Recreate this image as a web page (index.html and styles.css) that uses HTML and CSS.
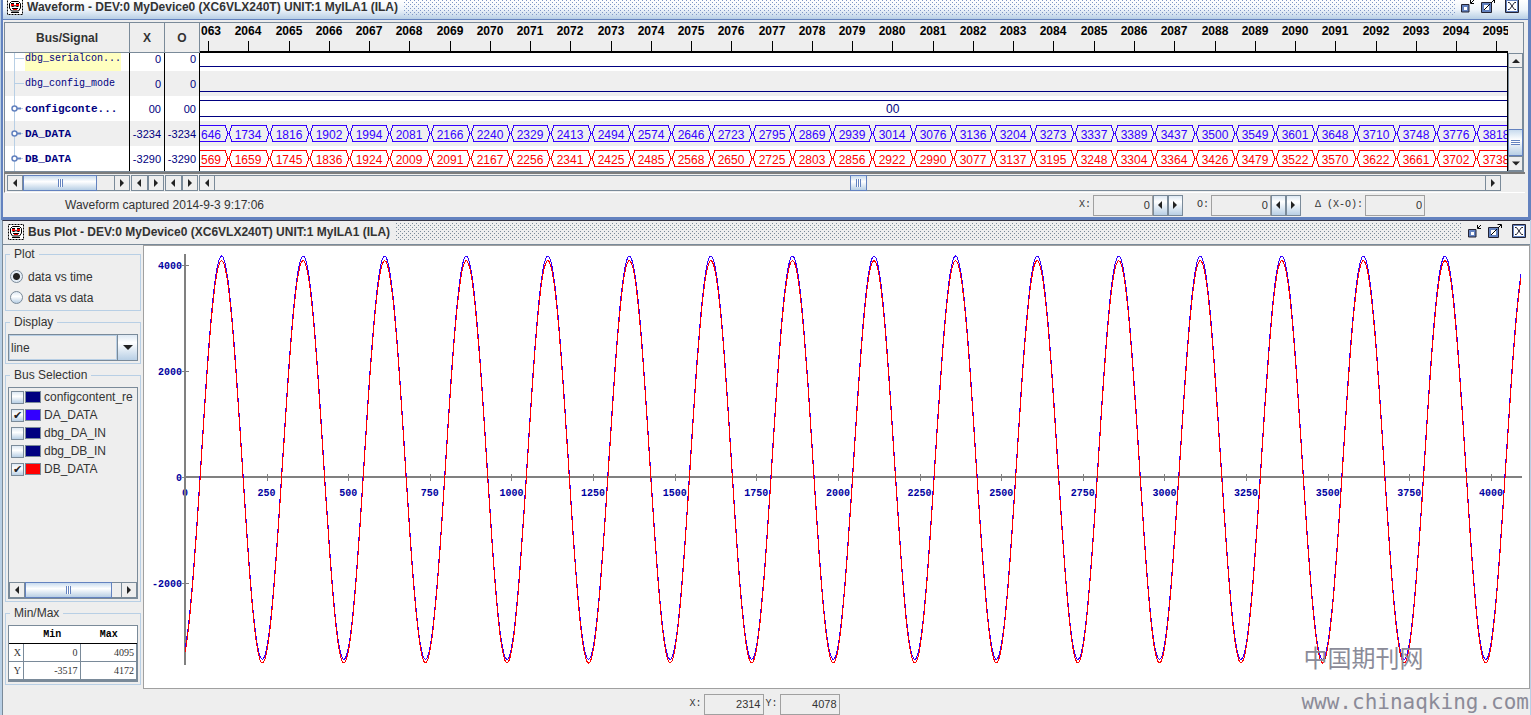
FILE: index.html
```html
<!DOCTYPE html>
<html lang="en">
<head>
  <meta charset="utf-8">
  <title>Waveform and Bus Plot</title>
  <link rel="stylesheet" href="styles.css">
</head>
<body>
  <!-- Shared icons -->
  <svg class="defs" width="0" height="0">
    <defs>
      <symbol id="app" viewBox="0 0 16 16">
        <rect x="0.500" y="0.500" width="15" height="15" fill="#fff" stroke="#000" stroke-dasharray="2 1"/>
        <path d="M4.500 2.500h7l2 2v4.500l-2 3h-7l-2-3V4.500z" fill="#fff" stroke="#000"/>
        <path d="M4 5h3v2H4zM9 5h3v2H9zM6 10h4v1H6z" fill="#f00"/>
        <path d="M4 4.500h3M9 4.500h3M4.500 7.500h2l1.500-1 1.500 1h2M5 9.500h6M4 13.500h8" fill="none" stroke="#000"/>
      </symbol>
      <symbol id="min" viewBox="0 0 14 14">
        <rect x="2" y="7" width="5" height="5" fill="#fff" stroke="#6382bf" stroke-width="2"/>
        <path d="M0.500 13V5.500H8V13z" fill="none" stroke="#223"/>
        <path d="M9.500 1v3.500H13M10 4l3-3" fill="none" stroke="#000"/>
      </symbol>
      <symbol id="max" viewBox="0 0 14 14">
        <rect x="2" y="5" width="7" height="7" fill="#fff" stroke="#6382bf" stroke-width="2"/>
        <path d="M0.500 13.500V3.500h10v10z" fill="none" stroke="#223"/>
        <path d="M3 11l6-6M10 4l3-3M9.500 0.500h4V4" fill="none" stroke="#000"/>
      </symbol>
      <symbol id="close" viewBox="0 0 14 14">
        <rect x="1.500" y="1.500" width="11" height="11" fill="#fff" stroke="#6382bf"/>
        <path d="M0.500 0.500h13v13H0.500z" fill="none" stroke="#223"/>
        <path d="M3 3.500h1.500l5 7H11M11 3.500H9.500l-5 7H3" fill="none" stroke="#223"/>
      </symbol>
      <symbol id="left" viewBox="0 0 8 8"><path d="M6 0v8L2 4z" fill="#222"/></symbol>
      <symbol id="right" viewBox="0 0 8 8"><path d="M2 0v8l4-4z" fill="#222"/></symbol>
      <symbol id="up" viewBox="0 0 8 8"><path d="M0 6h8L4 2z" fill="#222"/></symbol>
      <symbol id="down" viewBox="0 0 10 6"><path d="M0 0h10L5 5z" fill="#222"/></symbol>
      <symbol id="leaf" viewBox="0 0 18 25"><path d="M7.500 0v25M8 12.500h9" stroke="#b8cfe5"/></symbol>
      <symbol id="leafCut" viewBox="0 0 18 18"><path d="M7.500 0v18M8 5.500h9" stroke="#b8cfe5"/></symbol>
      <symbol id="node" viewBox="0 0 18 25">
        <path d="M7.500 0v25M10 12.500h6" stroke="#b8cfe5"/>
        <path d="M9 12.500h5" stroke="#6382bf" stroke-width="2"/>
        <circle cx="7.500" cy="12.500" r="2.500" fill="#fff" stroke="#6382bf" stroke-width="1.500"/>
      </symbol>
      <pattern id="bumpsBlue" width="4" height="4" patternUnits="userSpaceOnUse">
        <rect width="1" height="1" fill="#7f97c6"/><rect x="2" y="2" width="1" height="1" fill="#7f97c6"/>
      </pattern>
      <pattern id="bumpsGray" width="4" height="4" patternUnits="userSpaceOnUse">
        <rect width="1" height="1" fill="#7a8a99"/><rect x="2" y="2" width="1" height="1" fill="#7a8a99"/>
      </pattern>
    </defs>
  </svg>

  <!-- Waveform window -->
  <section class="frame frame-wave">
    <header class="titlebar active">
      <svg class="app-icon"><use href="#app"/></svg>
      <h1>Waveform - DEV:0 MyDevice0 (XC6VLX240T) UNIT:1 MyILA1 (ILA)</h1>
      <svg class="bumps"><rect width="100%" height="100%" fill="url(#bumpsBlue)"/></svg>
      <button aria-label="Minimize"><svg><use href="#min"/></svg></button>
      <button aria-label="Maximize"><svg><use href="#max"/></svg></button>
      <button class="last" aria-label="Close"><svg><use href="#close"/></svg></button>
    </header>

    <div class="signals">
      <table class="signal-table">
        <colgroup><col class="col-name"><col class="col-val"><col class="col-val"><col></colgroup>
        <thead>
          <tr><th>Bus/Signal</th><th>X</th><th>O</th><th class="wave"><svg id="ruler"></svg></th></tr>
        </thead>
        <tbody>
          <tr class="cut">
            <td><div class="name"><svg><use href="#leafCut"/></svg><span class="picked">dbg_serialcon...</span></div></td>
            <td class="val">0</td><td class="val">0</td><td class="wave"><svg data-line="13"></svg></td>
          </tr>
          <tr class="odd">
            <td><div class="name"><svg><use href="#leaf"/></svg><span>dbg_config_mode</span></div></td>
            <td class="val">0</td><td class="val">0</td><td class="wave"><svg data-line="20"></svg></td>
          </tr>
          <tr>
            <td><div class="name bus"><svg><use href="#node"/></svg><span>configconte...</span></div></td>
            <td class="val">00</td><td class="val">00</td><td class="wave"><svg id="config"></svg></td>
          </tr>
          <tr class="odd">
            <td><div class="name bus"><svg><use href="#node"/></svg><span>DA_DATA</span></div></td>
            <td class="val">-3234</td><td class="val">-3234</td><td class="wave"><svg id="busA"></svg></td>
          </tr>
          <tr>
            <td><div class="name bus"><svg><use href="#node"/></svg><span>DB_DATA</span></div></td>
            <td class="val">-3290</td><td class="val">-3290</td><td class="wave"><svg id="busB"></svg></td>
          </tr>
        </tbody>
      </table>
      <div class="vscroll">
        <button aria-label="Scroll up"><svg><use href="#up"/></svg></button>
        <div class="track"></div>
        <div class="thumb"></div>
        <button aria-label="Scroll down"><svg><use href="#down"/></svg></button>
      </div>
    </div>

    <div class="scroll-row">
      <div class="hscroll names">
        <button aria-label="Names left"><svg><use href="#left"/></svg></button>
        <div class="thumb"></div><div class="track"></div>
        <button aria-label="Names right"><svg><use href="#right"/></svg></button>
      </div>
      <div class="hscroll small">
        <button aria-label="X left"><svg><use href="#left"/></svg></button>
        <button aria-label="X right"><svg><use href="#right"/></svg></button>
      </div>
      <div class="hscroll small">
        <button aria-label="O left"><svg><use href="#left"/></svg></button>
        <button aria-label="O right"><svg><use href="#right"/></svg></button>
      </div>
      <div class="hscroll waves">
        <button aria-label="Wave left"><svg><use href="#left"/></svg></button>
        <div class="track before"></div><div class="thumb"></div><div class="track after"></div>
        <button aria-label="Wave right"><svg><use href="#right"/></svg></button>
      </div>
    </div>

    <div class="status">
      <span class="captured">Waveform captured 2014-9-3 9:17:06</span>
      <label for="curX">X:</label>
      <input id="curX" type="text" value="0" readonly>
      <button aria-label="Previous X"><svg><use href="#left"/></svg></button>
      <button aria-label="Next X"><svg><use href="#right"/></svg></button>
      <label class="apart" for="curO">O:</label>
      <input id="curO" type="text" value="0" readonly>
      <button aria-label="Previous O"><svg><use href="#left"/></svg></button>
      <button aria-label="Next O"><svg><use href="#right"/></svg></button>
      <label class="apart" for="delta">Δ (X-O):</label>
      <input id="delta" type="text" value="0" readonly>
    </div>
  </section>

  <!-- Bus plot window -->
  <section class="frame frame-plot">
    <header class="titlebar">
      <svg class="app-icon"><use href="#app"/></svg>
      <h1>Bus Plot - DEV:0 MyDevice0 (XC6VLX240T) UNIT:1 MyILA1 (ILA)</h1>
      <svg class="bumps"><rect width="100%" height="100%" fill="url(#bumpsGray)"/></svg>
      <button aria-label="Minimize"><svg><use href="#min"/></svg></button>
      <button aria-label="Maximize"><svg><use href="#max"/></svg></button>
      <button class="last" aria-label="Close"><svg><use href="#close"/></svg></button>
    </header>

    <div class="plot-body">
      <aside>
        <fieldset class="plot-kind">
          <legend>Plot</legend>
          <label><input type="radio" name="kind" checked> data vs time</label>
          <label><input type="radio" name="kind"> data vs data</label>
        </fieldset>

        <fieldset class="display">
          <legend>Display</legend>
          <div class="combo">
            <select aria-label="Display"><option>line</option></select>
            <span><svg><use href="#down"/></svg></span>
          </div>
        </fieldset>

        <fieldset class="bus-selection">
          <legend>Bus Selection</legend>
          <div class="bus-list">
            <label><input type="checkbox"><i></i>configcontent_re</label>
            <label><input type="checkbox" checked><i class="da"></i>DA_DATA</label>
            <label><input type="checkbox"><i></i>dbg_DA_IN</label>
            <label><input type="checkbox"><i></i>dbg_DB_IN</label>
            <label><input type="checkbox" checked><i class="db"></i>DB_DATA</label>
            <div class="hscroll">
              <button aria-label="List left"><svg><use href="#left"/></svg></button>
              <div class="thumb"></div><div class="track"></div>
              <button aria-label="List right"><svg><use href="#right"/></svg></button>
            </div>
          </div>
        </fieldset>

        <fieldset class="minmax">
          <legend>Min/Max</legend>
          <table>
            <thead><tr><th></th><th>Min</th><th>Max</th></tr></thead>
            <tbody>
              <tr><th>X</th><td>0</td><td>4095</td></tr>
              <tr><th>Y</th><td>-3517</td><td>4172</td></tr>
            </tbody>
          </table>
        </fieldset>
      </aside>
      <div class="plot-area"><svg id="plot"></svg></div>
    </div>

    <footer>
      <label for="posX">X:</label>
      <input id="posX" type="text" value="2314" readonly>
      <label for="posY">Y:</label>
      <input id="posY" type="text" value="4078" readonly>
    </footer>
  </section>

  <div class="watermark">
    <p class="cn">中国期刊网</p>
    <p class="url">www.chinaqking.com</p>
  </div>

  <script src="script.js"></script>
</body>
</html>
```
FILE: styles.css
```css
* {
  box-sizing: border-box;
}

body {
  margin: 0;
  min-height: 100vh;
  display: flex;
  flex-direction: column;
  position: relative;
  overflow: hidden;
  background-color: #b8cfe5;
  font-family: "Liberation Sans", Arial, sans-serif;
  font-size: 12px;
  line-height: 14px;
  color: #333;
}

.defs {
  position: absolute;
}

svg {
  display: block;
}

button {
  flex: none;
  display: flex;
  align-items: center;
  justify-content: center;
  padding: 0;
  border: 1px solid #7a8a99;
  background-color: #eee;
}

button svg {
  width: 8px;
  height: 8px;
}

.frame {
  background-color: #eee;
}

.frame-wave {
  margin-left: 1px;
  border: solid #6382bf;
  border-width: 0 3px 3px 2px;
}

.frame-plot {
  flex: 1;
  display: flex;
  flex-direction: column;
  margin: 0 1px 0 2px;
  border-left: 1px solid #7a8a99;
  border-top: 1px solid #334;
}

/* Title bars */
.titlebar {
  display: flex;
  align-items: flex-end;
  height: 24px;
  padding: 0 4px 4px 5px;
  border-bottom: 1px solid #7a8a99;
  overflow: hidden;
}

.titlebar.active {
  height: 20px;
  padding: 0 9px 4px 4px;
  border-bottom-color: #6382bf;
  background: linear-gradient(#fff, #eef4fa 50%, #b8cfe5);
}

.app-icon {
  flex: none;
  width: 16px;
  height: 16px;
}

h1 {
  margin: 0 6px 0 4px;
  font-size: 12px;
  line-height: 16px;
  white-space: nowrap;
}

.bumps {
  flex: 1;
  min-width: 0;
  height: 17px;
}

.titlebar button {
  margin-left: 6px;
  margin-bottom: 2px;
  border: none;
  background: none;
}

.titlebar button svg {
  width: 14px;
  height: 14px;
}

.titlebar .last {
  margin-left: 10px;
}

/* Signal table */
.signals {
  display: flex;
  margin: 2px 4px 0 1px;
  border: 1px solid #7a8a99;
}

.signal-table {
  flex: 1;
  min-width: 0;
  table-layout: fixed;
  border-collapse: separate;
  border-spacing: 0;
  background-color: #fff;
  color: #000080;
}

.col-name {
  width: 125px;
}

.col-val {
  width: 35px;
}

.signal-table th {
  height: 30px;
  padding: 0;
  border-right: 1px solid #7a8a99;
  border-bottom: 1px solid #7a8a99;
  background-color: #eee;
  color: #333;
}

.signal-table th.wave {
  border-bottom: 2px solid #000;
  border-right: none;
}

.signal-table td {
  height: 25px;
  padding: 0;
  border-right: 1px solid #000;
  overflow: hidden;
}

.signal-table .cut td {
  height: 18px;
  vertical-align: top;
}

.odd {
  background-color: #efefef;
}

.signal-table .val {
  padding-right: 3px;
  font-size: 11px;
  line-height: 12px;
  text-align: right;
}

.wave svg {
  width: 100%;
  height: 25px;
}

.cut .wave svg {
  height: 18px;
}

th.wave svg {
  height: 28px;
}

.name {
  display: flex;
  align-items: center;
  height: 25px;
  padding-left: 2px;
  font-family: "Liberation Mono", monospace;
  font-size: 10px;
  white-space: nowrap;
}

.cut .name {
  height: 18px;
  align-items: flex-start;
}

.cut .name svg {
  height: 18px;
}

.name.bus {
  font-size: 11px;
  font-weight: bold;
}

.name svg {
  flex: none;
  width: 18px;
  height: 25px;
}

.picked {
  height: 18px;
  line-height: 12px;
  background-color: #ffffc0;
}

/* Scrollbars */
.thumb {
  flex: none;
  display: flex;
  align-items: center;
  justify-content: center;
  border: 1px solid #6382bf;
  background: linear-gradient(#c8dbee, #fff 40%, #b8cfe5);
}

.thumb::before {
  content: "";
  width: 5px;
  height: 8px;
  background: repeating-linear-gradient(90deg, #6382bf 0 1px, #fff 1px 2px);
}

.track {
  flex: 1;
  border: solid #7a8a99;
  border-width: 1px 0;
}

.vscroll {
  display: flex;
  flex-direction: column;
  width: 15px;
  padding-top: 30px;
}

.vscroll button {
  height: 15px;
}

.vscroll .track {
  border-width: 0 1px;
}

.vscroll .thumb {
  height: 27px;
}

.vscroll .thumb::before {
  width: 9px;
  height: 5px;
  background: repeating-linear-gradient(#6382bf 0 1px, #fff 1px 2px);
}

.scroll-row {
  display: flex;
  margin: 0 3px 0 1px;
  padding: 1px 24px 1px 2px;
  border-top: 2px solid #7c7c7c;
  border-left: 1px solid #7c7c7c;
  border-bottom: 1px solid #fff;
}

.hscroll {
  display: flex;
  height: 16px;
}

.hscroll button {
  width: 16px;
}

.names {
  width: 123px;
  margin-right: 1px;
}

.names .thumb {
  width: 74px;
}

.small {
  width: 33px;
  margin-right: 1px;
}

.small button {
  flex: 1;
}

.waves {
  flex: 1;
}

.waves .thumb {
  width: 17px;
}

.waves .before {
  flex: 36;
}

.waves .after {
  flex: 35;
}

/* Status line and footer */
.status,
footer {
  display: flex;
  align-items: center;
  height: 24px;
  font-size: 11px;
}

.status {
  padding: 0 103px 0 62px;
}

.captured {
  margin-right: auto;
  font-size: 12px;
}

.status label,
footer label {
  margin-right: 2px;
  font-family: "Liberation Mono", monospace;
  font-size: 10px;
}

.status .apart {
  margin-left: 14px;
}

.status input,
footer input {
  width: 60px;
  height: 21px;
  padding: 0 2px;
  border: 1px solid #a0a0a0;
  background-color: #eee;
  font: 11px "Liberation Sans", Arial, sans-serif;
  color: #333;
  text-align: right;
}

.status button {
  width: 15px;
  height: 21px;
  background: linear-gradient(#dde8f3, #fff 30%, #b8cfe5);
}

footer {
  justify-content: center;
  height: 26px;
  padding: 4px 4px 0 0;
}

footer input + label {
  margin-left: 2px;
}

/* Bus plot */
.plot-body {
  flex: 1;
  display: flex;
}

aside {
  flex: none;
  display: flex;
  flex-direction: column;
  gap: 4px;
  width: 140px;
  padding: 2px 2px 4px;
}

fieldset {
  min-width: 0;
  margin: 0;
  padding: 5px 2px 2px;
  border: 1px solid #b8cfe5;
}

legend {
  margin-left: 2px;
  padding: 0 4px;
  line-height: 14px;
}

.plot-kind label {
  display: flex;
  align-items: center;
  gap: 5px;
  height: 21px;
  padding-left: 2px;
}

input[type="radio"],
input[type="checkbox"] {
  appearance: none;
  flex: none;
  width: 13px;
  height: 13px;
  margin: 0;
  border: 1px solid #7a8a99;
  background: linear-gradient(#dde8f3, #fff 40%, #b8cfe5);
}

input[type="radio"] {
  border-radius: 50%;
}

input[type="radio"]:checked {
  background: radial-gradient(circle, #222 0 3px, #e4edf6 4px);
}

input[type="checkbox"]:checked::before {
  content: "✔";
  display: block;
  font: 11px/11px "DejaVu Sans", sans-serif;
  color: #222;
  text-align: center;
}

.combo {
  display: flex;
  height: 27px;
  border: 1px solid #7a8a99;
}

.combo select {
  appearance: none;
  flex: 1;
  min-width: 0;
  padding: 0 1px;
  border: 1px solid #b8cfe5;
  border-radius: 0;
  background-color: #eee;
  font: 12px "Liberation Sans", Arial, sans-serif;
  color: #333;
}

.combo span {
  display: flex;
  align-items: center;
  justify-content: center;
  width: 20px;
  border-left: 1px solid #7a8a99;
  background: linear-gradient(#dde8f3, #fff 30%, #b8cfe5);
}

.combo svg {
  width: 10px;
  height: 6px;
}

.bus-selection {
  flex: 1;
  display: flex;
}

.bus-list {
  flex: 1;
  min-width: 0;
  display: flex;
  flex-direction: column;
  border: 1px solid #7a8a99;
  overflow: hidden;
}

.bus-list label {
  display: flex;
  align-items: center;
  height: 18px;
  padding-left: 2px;
  white-space: nowrap;
}

.bus-list i {
  flex: none;
  width: 16px;
  height: 12px;
  margin: 0 3px 0 1px;
  border: 1px solid #7a8a99;
  background-color: #000080;
}

.bus-list .da {
  background-color: #3300ff;
}

.bus-list .db {
  background-color: #ff0000;
}

.bus-list .hscroll {
  margin-top: auto;
}

.bus-list .thumb {
  width: 87px;
}

.minmax table {
  width: 100%;
  table-layout: fixed;
  border: 1px solid #7a8a99;
  border-bottom-width: 2px;
  border-spacing: 0;
  background-color: #fff;
  font: 10px/12px "Liberation Serif", serif;
}

.minmax th,
.minmax td {
  height: 18px;
  padding: 0 2px;
  border: solid #7a8a99;
  border-width: 0 1px 1px 0;
  text-align: right;
}

.minmax thead th {
  border-right: none;
  border-bottom-color: #000;
  font: bold 10px "Liberation Mono", monospace;
  color: #000;
  text-align: center;
}

.minmax th:first-child {
  width: 15px;
  font-weight: normal;
}

.plot-area {
  flex: 1;
  min-width: 0;
  position: relative;
  border: 1px solid #a0a0a0;
  background-color: #fff;
}

/* fills the white area at whatever size it takes */
#plot {
  position: absolute;
  width: 100%;
  height: 100%;
}

#plot text {
  font: bold 10px "Liberation Mono", monospace;
}

#ruler text {
  font: bold 12px "Liberation Sans", Arial, sans-serif;
}

/* Watermark */
.watermark {
  position: absolute;
  right: 2px;
  bottom: 0;
  color: #8b8b98;
}

.watermark p {
  margin: 0;
}

.cn {
  padding-left: 2px;
  font: 24px/30px "Noto Sans CJK SC", sans-serif;
}

.url {
  padding-top: 18px;
  font: 21px/25px "DejaVu Sans Mono", monospace;
}
```
FILE: script.js
```js
var STEP = 40.26;

// The first sample is scrolled partly out, only its last three digits show
var daData = ["646", 1734, 1816, 1902, 1994, 2081, 2166, 2240, 2329, 2413, 2494, 2574, 2646, 2723, 2795, 2869, 2939,
  3014, 3076, 3136, 3204, 3273, 3337, 3389, 3437, 3500, 3549, 3601, 3648, 3710, 3748, 3776, 3818];
var dbData = ["569", 1659, 1745, 1836, 1924, 2009, 2091, 2167, 2256, 2341, 2425, 2485, 2568, 2650, 2725, 2803, 2856,
  2922, 2990, 3077, 3137, 3195, 3248, 3304, 3364, 3426, 3479, 3522, 3570, 3622, 3661, 3702, 3738];

function line(x1, y1, x2, y2, color, width) {
  return '<line x1="' + x1 + '" y1="' + y1 + '" x2="' + x2 + '" y2="' + y2 + '" stroke="' + color +
    '" stroke-width="' + (width || 1) + '" shape-rendering="crispEdges"/>';
}

function text(x, y, value, color, anchor) {
  return '<text x="' + x + '" y="' + y + '" fill="' + color + '" text-anchor="' + (anchor || "middle") + '">' + value + '</text>';
}

function center(i) {
  return Math.round(8 + i * STEP);
}

function labelX(i) {
  return i ? center(i) : 11;
}

// Sample numbers above the waves
function drawRuler() {
  var out = "";
  for (var i = 0; i < daData.length; i++) {
    out += text(labelX(i), 12, i ? 2063 + i : "063", "#000");
    out += line(center(i) + 0.5, 18, center(i) + 0.5, 28, "#000");
  }
  document.getElementById("ruler").innerHTML = out;
}

// One row of bus values, a hexagon for each sample
function drawBus(id, data, color) {
  var out = "";
  data.forEach(function (value, i) {
    var l = center(i) - 19;
    var r = center(i + 1) - 20;
    out += '<path d="M' + l + ' 12.5L' + (l + 3) + ' 4.5H' + (r - 3) + 'L' + r + ' 12.5L' + (r - 3) + ' 20.5H' + (l + 3) +
      'z" fill="none" stroke="' + color + '" shape-rendering="crispEdges"/>';
    out += text(labelX(i), 18, value, color);
  });
  document.getElementById(id).innerHTML = out;
}

function drawPlot() {
  var svg = document.getElementById("plot");
  var w = svg.clientWidth;
  var h = svg.clientHeight;
  var x0 = 41;
  var x1 = w - 7;
  var max = 4172;
  var min = -3517;

  function px(n) { return x0 + n / 4095 * (x1 - x0); }
  function py(v) { return 10 + (max - v) / (max - min) * (h - 35); }

  function curve(mid, amp, color) {
    var points = [];
    for (var n = 0; n <= 4095; n += 4) {
      var v = mid + amp * Math.cos(2 * Math.PI * (n - 112) / 249.8);
      points.push(px(n).toFixed(1) + "," + py(v).toFixed(1));
    }
    return '<polyline points="' + points.join(" ") + '" fill="none" stroke="' + color + '" shape-rendering="crispEdges"/>';
  }

  var out = "";
  var zero = Math.round(py(0));
  for (var n = 0; n <= 4000; n += 250) {
    out += text(px(n), zero + 19, n, "#0000a0");
    if (n) out += line(Math.round(px(n)) + 0.5, zero - 3, Math.round(px(n)) + 0.5, zero + 4, "#808080");
  }
  [4000, 2000, 0, -2000].forEach(function (v) {
    var y = Math.round(py(v)) + 0.5;
    out += text(x0 - 3, y + 3, v, "#0000a0", "end");
    out += line(x0 - 3, y, x0 + 4, y, "#808080");
  });
  out += line(x0, 8, x0, h - 23, "#808080", 2);
  out += line(x0, zero, x1, zero, "#808080", 2);
  out += curve(361, 3811, "#3300ff");
  out += curve(284, 3801, "#ff0000");
  svg.innerHTML = out;
}

function drawAll() {
  drawRuler();
  document.querySelectorAll("[data-line]").forEach(function (svg) {
    var y = Number(svg.dataset.line) + 0.5;
    svg.innerHTML = line(0, y, "100%", y, "#000080");
  });
  document.getElementById("config").innerHTML = line(0, 4.5, "100%", 4.5, "#000080") +
    line(0, 20.5, "100%", 20.5, "#000080") + text("53%", 17, "00", "#000080");
  drawBus("busA", daData, "#3300ff");
  drawBus("busB", dbData, "#ff0000");
  drawPlot();
}

drawAll();
window.addEventListener("resize", drawAll);
```
